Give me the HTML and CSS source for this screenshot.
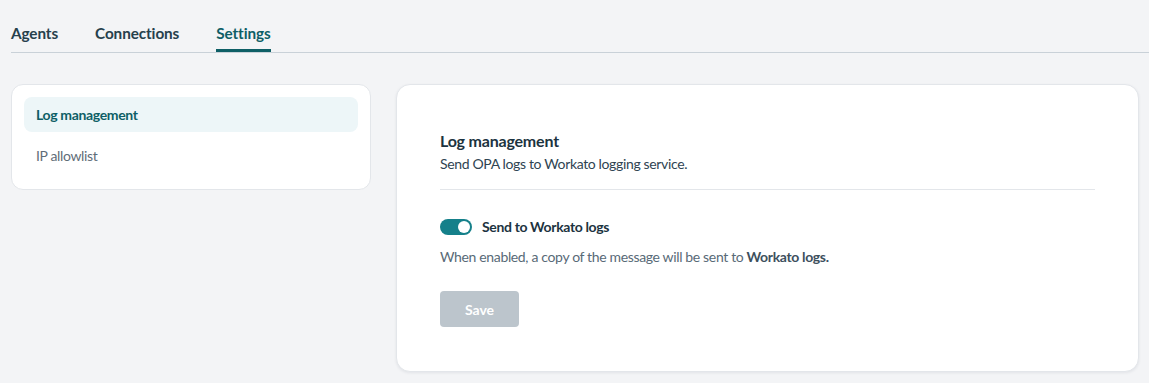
FILE: index.html
```html
<!DOCTYPE html>
<html lang="en">
<head>
<meta charset="utf-8">
<title>Settings</title>
<link rel="stylesheet" href="styles.css">
</head>
<body>

<nav class="tabs">
  <a class="tab">Agents</a>
  <a class="tab">Connections</a>
  <a class="tab active">Settings</a>
</nav>

<main class="layout">
  <aside class="side card">
    <a class="side-item active">Log management</a>
    <a class="side-item">IP allowlist</a>
  </aside>

  <section class="panel card">
    <h2>Log management</h2>
    <p class="sub">Send OPA logs to Workato logging service.</p>
    <hr>
    <label class="switch-row">
      <span class="switch on"><span class="knob"></span></span>
      <span class="switch-label">Send to Workato logs</span>
    </label>
    <p class="hint">When enabled, a copy of the message will be sent to <b>Workato logs.</b></p>
    <button class="save" disabled>Save</button>
  </section>
</main>

</body>
</html>
```

FILE: styles.css
```css
:root{
  --bg:#f3f4f6;--card:#fff;--line:#c9d1d8;--teal:#0e5f66;--toggle:#15808a;
  --text:#1c3340;--muted:#586a77;--radius:14px
}
*{box-sizing:border-box;margin:0}
body{background:var(--bg);color:var(--text);font-family:"Source Sans Pro","Lato","Noto Sans",sans-serif;height:100vh;overflow:hidden;letter-spacing:-.35px}

/* tabs */
.tabs{display:flex;gap:37px;margin-left:11px;padding-top:23px;border-bottom:1px solid var(--line);height:53px}
.tab{font-size:15.3px;font-weight:700;color:#26404c;line-height:20px;height:29px;border-bottom:3px solid transparent;letter-spacing:-.1px}
.tab.active{color:var(--teal);border-bottom-color:var(--teal)}

/* layout */
.layout{display:grid;grid-template-columns:360px 743px;gap:25px;padding:31px 0 0 11px;align-items:start}
.card{background:var(--card);border:1px solid #e3e6ea;border-radius:var(--radius)}

.side{padding:12px 12px 16px;display:flex;flex-direction:column;gap:6px;border-radius:12px}
.side-item{display:block;padding:0 12px;height:35px;line-height:35px;font-size:14px;color:#5f6d78;border-radius:8px}
.side-item.active{background:#edf6f8;color:var(--teal);font-weight:700}

.panel{height:288px;padding:45px 43px 0 43px;box-shadow:0 1px 3px rgba(20,40,60,.08)}
.panel h2{font-size:16px;font-weight:700;line-height:22px;color:var(--text);letter-spacing:-.2px}
.sub{font-size:14px;line-height:20px;margin-top:2px;color:#2f4452}
.panel hr{border:none;border-top:1px solid #e3e6ea;margin:15px 0 0}

.switch-row{display:flex;align-items:center;gap:10px;margin-top:28px}
.switch{width:32px;height:16px;border-radius:8px;background:#c0c8cf;position:relative;display:inline-block}
.switch.on{background:var(--toggle)}
.switch .knob{position:absolute;top:2px;left:2px;width:12px;height:12px;border-radius:50%;background:#fff}
.switch.on .knob{left:18px}
.switch-label{font-size:14px;font-weight:700;color:var(--text)}

.hint{font-size:14px;line-height:20px;color:var(--muted);margin-top:12px}
.hint b{color:#3d505d}

.save{margin-top:24px;width:79px;height:36px;border:none;border-radius:4px;background:#bcc5cc;color:#fff;font:inherit;font-size:14px;font-weight:700}
```
